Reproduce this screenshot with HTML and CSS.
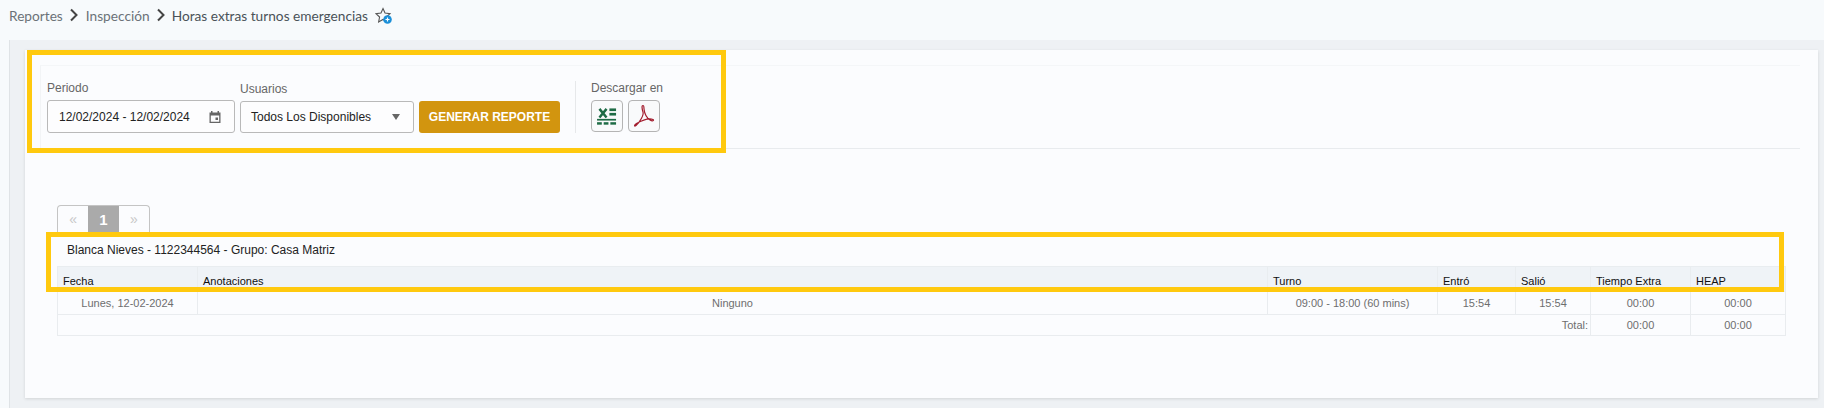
FILE: index.html
```html
<!DOCTYPE html>
<html lang="es">

<head>
    <meta charset="UTF-8">
    <title>Horas extras turnos emergencias</title>
    <link rel="stylesheet" href="styles.css">
</head>

<body>
    <!-- ruta -->
    <div class="breadcrumb">
        <span>Reportes</span>
        <svg class="crumb-arrow" viewBox="0 0 10 14"><path d="M2 1.5 L7.5 7 L2 12.5" /></svg>
        <span>Inspección</span>
        <svg class="crumb-arrow crumb-arrow-last" viewBox="0 0 10 14"><path d="M2 1.5 L7.5 7 L2 12.5" /></svg>
        <span class="crumb-current">Horas extras turnos emergencias</span>
        <svg class="fav-icon" viewBox="0 0 18 18">
            <path class="fav-star" d="M8 1.5 L10 6 L15 6.6 L11.4 10 L12.4 15 L8 12.5 L3.6 15 L4.6 10 L1 6.6 L6 6 Z" />
            <circle class="fav-dot" cx="12.5" cy="12.5" r="4.3" />
            <path class="fav-plus" d="M10.5 12.5 H14.5 M12.5 10.5 V14.5" />
        </svg>
    </div>

    <div class="content">
        <div class="card">
            <!-- filtros -->
            <div class="filters">
                <div class="field field-date">
                    <label>Periodo</label>
                    <div class="input">
                        <span>12/02/2024 - 12/02/2024</span>
                        <svg class="calendar-icon" viewBox="0 0 14 14">
                            <path d="M1.5 2.5 H3 V1 H4.5 V2.5 H9.5 V1 H11 V2.5 H12.5 V13 H1.5 Z M2.8 5.5 V11.8 H11.2 V5.5 Z" />
                            <rect x="7.5" y="7.5" width="2.5" height="2.5" />
                        </svg>
                    </div>
                </div>
                <div class="field field-users">
                    <label>Usuarios</label>
                    <div class="input select">
                        <span>Todos Los Disponibles</span>
                        <i class="select-arrow"></i>
                    </div>
                </div>
                <button class="btn-report">GENERAR REPORTE</button>
                <div class="downloads">
                    <label>Descargar en</label>
                    <div class="download-buttons">
                        <button class="btn-icon">
                            <svg viewBox="0 0 24 20" class="icon-excel">
                                <path class="excel-x" d="M3.5 2 L11 11 M11 2 L3.5 11" />
                                <rect x="14" y="1.5" width="7" height="2.8" />
                                <rect x="14" y="6.2" width="7" height="2.8" />
                                <rect x="1" y="12.5" width="20" height="1.8" />
                                <rect x="1" y="16" width="5" height="2.6" />
                                <rect x="8" y="16" width="5" height="2.6" />
                                <rect x="15" y="16" width="6" height="2.6" />
                            </svg>
                        </button>
                        <button class="btn-icon">
                            <svg viewBox="0 0 22 24" class="icon-pdf">
                                <path d="M10 1.5 C8.5 1.5 9 5 10 8 C11 11 7 18 3 21.5 C1 23 1 21 3.5 19.5 C7 17.5 15 13.5 20 15.5 C21.5 16.5 19.5 17.5 17 16 C14 14 11.5 9.5 11 5 C10.9 3 11 1.5 10 1.5 Z" />
                            </svg>
                        </button>
                    </div>
                </div>
            </div>

            <!-- paginacion -->
            <ul class="pagination">
                <li>«</li>
                <li class="active">1</li>
                <li>»</li>
            </ul>

            <!-- reporte -->
            <div class="report">
                <div class="report-title">Blanca Nieves - 1122344564 - Grupo: Casa Matriz</div>
                <table class="report-table">
                    <colgroup>
                        <col class="col-fecha">
                        <col class="col-notas">
                        <col class="col-turno">
                        <col class="col-entro">
                        <col class="col-salio">
                        <col class="col-extra">
                        <col class="col-heap">
                    </colgroup>
                    <thead>
                        <tr>
                            <th>Fecha</th>
                            <th>Anotaciones</th>
                            <th>Turno</th>
                            <th>Entró</th>
                            <th>Salió</th>
                            <th>Tiempo Extra</th>
                            <th>HEAP</th>
                        </tr>
                    </thead>
                    <tbody>
                        <tr>
                            <td>Lunes, 12-02-2024</td>
                            <td>Ninguno</td>
                            <td>09:00 - 18:00 (60 mins)</td>
                            <td>15:54</td>
                            <td>15:54</td>
                            <td>00:00</td>
                            <td>00:00</td>
                        </tr>
                        <tr class="total-row">
                            <td colspan="5" class="total-label">Total:</td>
                            <td>00:00</td>
                            <td>00:00</td>
                        </tr>
                    </tbody>
                </table>
            </div>
        </div>
    </div>

    <!-- recuadros amarillos sobre la captura -->
    <div class="mark mark-filters"></div>
    <div class="mark mark-table"></div>
</body>

</html>
```

FILE: styles.css
```css
* {
    box-sizing: border-box;
    margin: 0;
    padding: 0;
}

body {
    position: relative;
    height: 408px;
    overflow: hidden;
    background-color: #f7fafc;
    font-family: 'Liberation Sans', sans-serif;
    color: #666;
}

/* ruta */
.breadcrumb {
    display: flex;
    align-items: center;
    height: 40px;
    padding: 0 0 10px 9px;
    font-family: 'Lato', sans-serif;
    font-size: 13.7px;
    color: #6b7278;
}

.crumb-current {
    color: #4a5258;
}

.crumb-arrow {
    width: 10px;
    height: 14px;
    margin: 0 7px 0 6px;
    fill: none;
    stroke: #444;
    stroke-width: 2;
}

.crumb-arrow-last {
    margin-right: 6px;
}

.fav-icon {
    width: 18px;
    height: 18px;
    margin: 1px 0 0 7px;
}

.fav-star {
    fill: none;
    stroke: #555;
    stroke-width: 1.1;
}

.fav-dot {
    fill: #1b8fd8;
}

.fav-plus {
    fill: none;
    stroke: #fff;
    stroke-width: 1.2;
}

/* contenedor */
.content {
    height: 368px;
    margin-left: 9px;
    padding: 10px 6px 10px 15px;
    background-color: #eef1f4;
    border-left: 1px solid #dfe3e6;
}

.card {
    height: 348px;
    padding: 15px 18px 0 15px;
    background-color: #fbfcfe;
    box-shadow: 0 1px 3px rgba(0, 0, 0, 0.12);
}

/* filtros */
.filters {
    display: flex;
    align-items: flex-start;
    height: 84px;
    padding: 15px 0 0 6px;
    border-left: 1px solid #f2f4f6;
    border-bottom: 1px solid #e8ebee;
    border-top: 1px solid #f4f6f8;
}

.field label,
.downloads label {
    display: block;
    height: 19px;
    font-size: 12px;
    line-height: 15px;
    color: #666;
}

.field-date {
    width: 188px;
    margin-right: 5px;
}

.field-users {
    width: 174px;
    margin-right: 5px;
    padding-top: 1px;
}

.input {
    display: flex;
    align-items: center;
    justify-content: space-between;
    height: 33px;
    padding: 0 12px 0 11px;
    background-color: #fdfdfe;
    border: 1px solid #b9b9b9;
    border-radius: 3px;
    font-size: 12px;
    color: #222;
}

.select {
    height: 32px;
    padding-left: 10px;
}

.calendar-icon {
    width: 14px;
    height: 14px;
    fill: #666;
}

.select-arrow {
    width: 0;
    height: 0;
    margin-right: 1px;
    border-left: 4px solid transparent;
    border-right: 4px solid transparent;
    border-top: 6px solid #666;
}

.btn-report {
    width: 141px;
    height: 32px;
    margin-top: 20px;
    background-color: #d2950f;
    border: none;
    border-radius: 3px;
    font-family: 'Liberation Sans', sans-serif;
    font-size: 12px;
    font-weight: 700;
    color: #fff;
}

.downloads {
    height: 52px;
    margin-left: 15px;
    padding-left: 15px;
    border-left: 1px solid #e6e8ea;
}

.download-buttons {
    display: flex;
    gap: 5px;
}

.btn-icon {
    display: flex;
    align-items: center;
    justify-content: center;
    width: 32px;
    height: 32px;
    background-color: #f9fafb;
    border: 1px solid #b4b4b4;
    border-radius: 4px;
}

.icon-excel {
    width: 23px;
    height: 19px;
    fill: #1e6b45;
}

.excel-x {
    fill: none;
    stroke: #1e6b45;
    stroke-width: 2.6;
}

.icon-pdf {
    width: 22px;
    height: 24px;
    fill: none;
    stroke: #a31d2e;
    stroke-width: 1.2;
}

/* paginacion */
.pagination {
    display: flex;
    width: 93px;
    height: 27px;
    margin: 56px 0 0 17px;
    list-style: none;
    border: 1px solid #c4c4c4;
    border-bottom: none;
    border-radius: 4px 4px 0 0;
    font-size: 14px;
    color: #c8c8c8;
}

.pagination li {
    display: flex;
    align-items: center;
    justify-content: center;
    width: 31px;
}

.pagination .active {
    background-color: #aaa;
    color: #fff;
    font-size: 15px;
    font-weight: 700;
}

/* reporte */
.report {
    width: 1728px;
    margin-left: 17px;
    font-size: 11px;
}

.report-title {
    height: 34px;
    padding: 11px 0 0 10px;
    font-size: 12px;
    line-height: 14px;
    color: #222;
}

.report-table {
    width: 100%;
    table-layout: fixed;
    border-collapse: collapse;
}

.col-fecha { width: 140px; }
.col-notas { width: 1070px; }
.col-turno { width: 170px; }
.col-entro { width: 78px; }
.col-salio { width: 75px; }
.col-extra { width: 100px; }
.col-heap { width: 95px; }

.report-table th {
    height: 25px;
    padding: 3px 0 0 5px;
    background-color: #eff3f7;
    border: 1px solid #e9edf0;
    border-bottom: none;
    font-weight: 400;
    text-align: left;
    color: #111;
}

.report-table td {
    height: 23px;
    border: 1px solid #e9ecef;
    text-align: center;
    color: #6e6e6e;
}

.total-row td {
    height: 21px;
}

.report-table .total-label {
    padding-right: 2px;
    text-align: right;
}

/* recuadros amarillos */
.mark {
    position: absolute;
    border: 5px solid #ffc90e;
    pointer-events: none;
}

.mark-filters {
    left: 27px;
    top: 50px;
    width: 699px;
    height: 103px;
}

.mark-table {
    left: 46px;
    top: 232px;
    width: 1738px;
    height: 60px;
}
```
